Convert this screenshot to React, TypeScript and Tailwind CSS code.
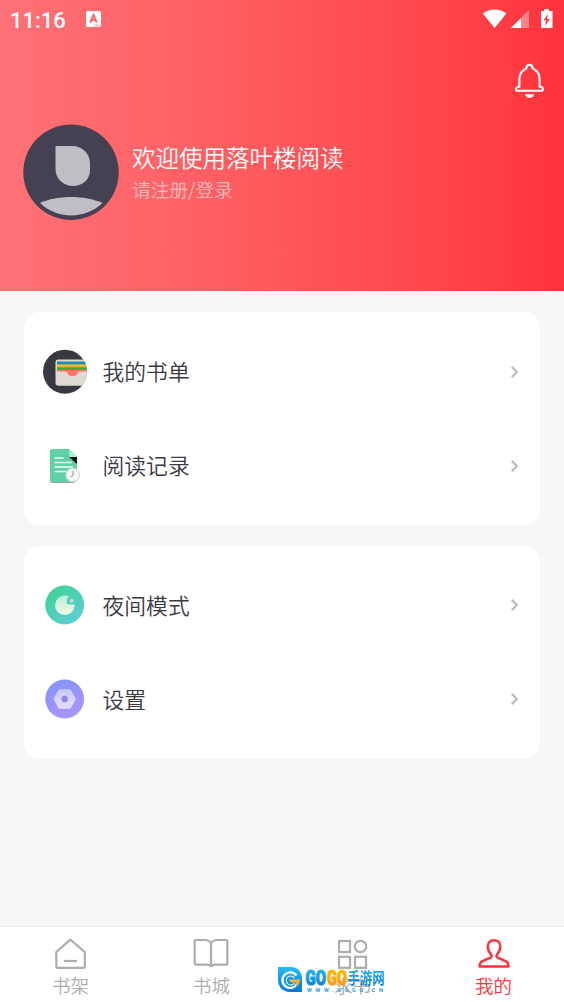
import type { ReactNode } from 'react';

interface MenuItem {
    label: string;
    icon: ReactNode;
}

interface TabItem {
    label: string;
    icon: ReactNode;
    active?: boolean;
}

const primaryMenu: MenuItem[] = [
    { label: '我的书单', icon: <BookListIcon /> },
    { label: '阅读记录', icon: <HistoryIcon /> },
];

const secondaryMenu: MenuItem[] = [
    { label: '夜间模式', icon: <NightIcon /> },
    { label: '设置', icon: <SettingsIcon /> },
];

const tabs: TabItem[] = [
    { label: '书架', icon: <ShelfIcon /> },
    { label: '书城', icon: <StoreIcon /> },
    { label: '求书', icon: <RequestIcon /> },
    { label: '我的', icon: <MineIcon />, active: true },
];

export default function App() {
    return (
        <div className="relative flex h-[1002px] w-[564px] flex-col overflow-hidden bg-[#f7f7f7] font-['Noto_Sans_CJK_SC_DemiLight','Noto_Sans_CJK_SC',sans-serif] font-[350]">
            <header className="h-[291px] shrink-0 bg-linear-to-r from-[#fd7277] to-[#ff323c] text-white">
                <StatusBar />
                <div className="flex h-[86px] items-center justify-end pr-[19px]">
                    <BellIcon />
                </div>
                <div className="flex h-24 items-center gap-[13px] pl-[23px]">
                    <Avatar />
                    <div>
                        <h1 className="text-[23.5px] leading-[34px]">欢迎使用落叶楼阅读</h1>
                        <p className="text-[18.7px] leading-[30px] text-white/55">请注册/登录</p>
                    </div>
                </div>
            </header>

            <main className="flex flex-1 flex-col gap-[20.6px] px-6 pt-[21px]">
                <MenuCard items={primaryMenu} />
                <MenuCard items={secondaryMenu} />
            </main>

            <nav className="grid h-[76px] shrink-0 grid-cols-4 border-t border-[#ececec] bg-white">
                {tabs.map(tab => (
                    <button
                        key={tab.label}
                        className={`flex flex-col items-center pt-2 pr-px text-[18.5px] leading-[26px] ${tab.active ? 'text-[#ff323c]' : 'text-[#adadad]'}`}
                    >
                        {tab.icon}
                        <span className="mt-px pl-px">{tab.label}</span>
                    </button>
                ))}
            </nav>

            <SiteBadge />
        </div>
    );
}

function StatusBar() {
    return (
        <div className="flex h-[38px] items-center justify-between px-[10px]">
            <div className="flex items-center gap-[20px]">
                <span className="w-14 pt-[3px] whitespace-nowrap font-[Roboto,sans-serif] text-[22px] font-medium leading-none">11:16</span>
                <svg width="15" height="16" viewBox="0 0 15 16">
                    <rect width="15" height="16" rx="1.5" fill="#fff" />
                    <path d="M4.2 11.500 7.500 4l3.300 7.500M5.400 9h4.300" fill="none" stroke="#ff686f" strokeWidth="2" />
                    <path d="M8 14.200h6" stroke="#ff686f" strokeWidth="1" strokeDasharray="1.4 .7" />
                </svg>
            </div>
            <svg width="72" height="20" viewBox="0 0 72 20" className="mb-px">
                <path d="M.9 4.400C7.500-.9 18-.9 24.400 4.400L12.600 18.900Z" fill="#fff" />
                <path d="M29 19 47 .8V19Z" fill="#fff" opacity=".38" />
                <path d="M29 19 39 8.900V19Z" fill="#fff" />
                <path d="M62 0h5v2h3.500v17H59V2h3Z" fill="#fff" />
                <path d="m66 5-4.500 6.200h2.600L63 17l5-7h-3Z" fill="#ff3a44" />
            </svg>
        </div>
    );
}

function BellIcon() {
    return (
        <svg width="31" height="36" viewBox="0 0 31 36" fill="none" stroke="currentColor" strokeWidth="2.100" strokeLinejoin="round">
            <path d="M5.400 23.700V16c0-5 3-8.900 7-10.800.4-4.400 5.800-4.400 6.200 0 4 1.900 7 5.800 7 10.800v7.700c4.300.2 4.300 4.100 1.500 4.100H3.900c-2.800 0-2.800-3.900 1.500-4.100Z" />
            <path d="M11 31.200h9c-1 5-8 5-9 0Z" fill="currentColor" stroke="none" />
        </svg>
    );
}

function Avatar() {
    return (
        <svg width="96" height="96" viewBox="0 0 96 96">
            <circle cx="48" cy="48.300" r="47.700" fill="#454153" />
            <path d="M32.500 22H49c10.500 0 18 8 18 17.500v6.500c0 9.500-7.500 16-17 16S32.500 55 32.500 45Z" fill="#c0bec5" />
            <path d="M17 79C34 71 62 71 79.500 79 62 95.500 34 95.500 17 79Z" fill="#c0bec5" />
        </svg>
    );
}

function MenuCard({ items }: { items: MenuItem[] }) {
    return (
        <section className="h-[213px] rounded-2xl bg-white pt-[12.5px]">
            {items.map(item => (
                <button key={item.label} className="flex h-[94px] w-full items-center pl-[18px] pr-5 text-left">
                    {item.icon}
                    <span className="ml-[14.5px] flex-1 text-[21.8px] text-[#3b3944]">{item.label}</span>
                    <svg width="11" height="14" viewBox="0 0 11 14">
                        <path d="m2.800 1.900 5.100 5.100-5.100 5.100" fill="none" stroke="#bdbdbd" strokeWidth="2.200" />
                    </svg>
                </button>
            ))}
        </section>
    );
}

function BookListIcon() {
    return (
        <svg width="46" height="46" viewBox="0 0 46 46">
            <clipPath id="listClip"><circle cx="23" cy="22.700" r="22" /></clipPath>
            <g clipPath="url(#listClip)">
                <rect width="46" height="46" fill="#383840" />
                <rect x="13.500" y="10.500" width="36" height="26" rx="2.500" fill="#dcd8d2" />
                <path d="M15 12.500h31V17H15Z" fill="#168fb7" />
                <path d="M15 15.200h31V20H15Z" fill="#f5b52c" />
                <path d="M15 18.200h31V23H15Z" fill="#3fac3c" />
                <path d="M15 21h31v3H15Z" fill="#fb7767" />
                <path d="M14 22.500h32v14H16.500c-1.500 0-2.500-1-2.500-2.500Z" fill="#dfdad3" />
                <path d="M23.500 22h14c-1.200.5-1.500 1.200-2.200 2.500-1.800 3.600-7.800 3.600-9.600 0-.7-1.300-1-2-2.200-2.500Z" fill="#fb7767" />
            </g>
        </svg>
    );
}

function HistoryIcon() {
    return (
        <svg width="46" height="46" viewBox="0 0 46 46">
            <path d="M8 38.500h24v1H9Z" fill="#244d3d" />
            <path d="M10 6h17l8 8v23c0 1.500-.8 2-2 2H10c-1.200 0-2-.8-2-2V8c0-1.200.8-2 2-2Z" fill="#60d0a5" />
            <path d="M27 14h8v7Z" fill="#111" />
            <path d="M27 6v8h8Z" fill="#a5f0d1" />
            <path d="M12.500 15h9M12.500 19.500H30M12.500 24H31M12.500 28.500H24" stroke="#effff8" strokeWidth="1.600" />
            <circle cx="30.700" cy="32" r="6.800" fill="#f7f7f7" stroke="#d5d5d5" />
            <path d="M31 28v4.500L28.500 34" fill="none" stroke="#aaa" strokeWidth="1.300" />
        </svg>
    );
}

function NightIcon() {
    return (
        <svg width="46" height="46" viewBox="0 0 46 46">
            <defs>
                <linearGradient id="night" x1="0.2" y1="0" x2="0.9" y2="1">
                    <stop stopColor="#3fd193" />
                    <stop offset="1" stopColor="#61cedc" />
                </linearGradient>
                <linearGradient id="moon" x1="0" y1="0" x2="0" y2="1">
                    <stop stopColor="#bcebd8" />
                    <stop offset="1" stopColor="#f2fbe9" />
                </linearGradient>
            </defs>
            <circle cx="22.700" cy="23" r="19.400" fill="url(#night)" />
            <path d="M22.700 13.500c2 0 3.800.3 3.800 1 0 .5-.4.900-.8 1.500-1.800 3.500-1.500 6.500 1.500 6.500h4.200c1 0 1.400.5 1.200 1.500A9.800 9.800 0 1 1 22.700 13.500Z" fill="url(#moon)" />
            <circle cx="29.700" cy="18.700" r="2" fill="#b9dfd6" />
        </svg>
    );
}

function SettingsIcon() {
    return (
        <svg width="46" height="46" viewBox="0 0 46 46">
            <defs>
                <linearGradient id="settings" x1="0.3" y1="0" x2="0.8" y2="1">
                    <stop stopColor="#8594fa" />
                    <stop offset="1" stopColor="#ae94fd" />
                </linearGradient>
                <linearGradient id="nut" x1="0" y1="0" x2="0" y2="1">
                    <stop stopColor="#c9ccfd" />
                    <stop offset="1" stopColor="#e4dcff" />
                </linearGradient>
            </defs>
            <circle cx="22.700" cy="23" r="19.400" fill="url(#settings)" />
            <path d="M17.500 14.500h10.400l4.700 8.500-4.700 8.500H17.500L12.800 23Z" fill="url(#nut)" stroke="url(#nut)" strokeWidth="2.500" strokeLinejoin="round" />
            <circle cx="22.700" cy="23" r="3.200" fill="#8e86dd" />
        </svg>
    );
}

function ShelfIcon() {
    return (
        <svg width="36" height="36" viewBox="0 0 36 36" fill="none" stroke="currentColor" strokeWidth="2.200" strokeLinejoin="round">
            <path d="M18.300 4.700 32.800 17v14.500c0 .8-.5 1.300-1.300 1.300H5.600c-.8 0-1.300-.5-1.300-1.300V17Z" />
            <path d="M12 26h13" />
        </svg>
    );
}

function StoreIcon() {
    return (
        <svg width="36" height="36" viewBox="0 0 36 36" fill="none" stroke="currentColor" strokeWidth="2.200" strokeLinejoin="round">
            <path d="M18 7.500c-2-1.700-3.500-2.500-5.500-2.500H2.700c-.6 0-1 .4-1 1v22.500c0 .8.400 1.200 1 1.200h10.800c2 0 3.500.5 4.500 1.500 1-1 2.500-1.500 4.500-1.500h10.800c.6 0 1-.4 1-1.200V6c0-.6-.4-1-1-1h-9.800c-2 0-3.500.8-5.500 2.500Zm0 0v24" />
        </svg>
    );
}

function RequestIcon() {
    return (
        <svg width="36" height="36" viewBox="0 0 36 36" fill="none" stroke="currentColor" strokeWidth="2.200">
            <rect x="5" y="6" width="11" height="11" />
            <circle cx="26.500" cy="11.500" r="5.700" />
            <rect x="5" y="21.800" width="11" height="11" />
            <rect x="21" y="21.800" width="11" height="11" />
        </svg>
    );
}

function MineIcon() {
    return (
        <svg width="36" height="36" viewBox="-.8 0 36 36" fill="none" stroke="currentColor" strokeWidth="2.500" strokeLinejoin="round">
            <path d="M18.200 5.200c-3.700 0-6.200 2.600-6.200 6.300 0 3.900 1.700 6.300 3.500 8.500.8 1 .4 2-.8 2.600l-8 3.600c-2.200 1-2.900 2.800-2.900 5.400h29c0-2.600-.8-4.400-3-5.400l-8-3.600c-1.200-.6-1.600-1.600-.8-2.600 1.800-2.200 3.500-4.600 3.500-8.500 0-3.700-2.600-6.300-6.300-6.300Z" />
        </svg>
    );
}

// Floating site mark, lies over the tab bar
function SiteBadge() {
    return (
        <div className="pointer-events-none absolute left-[277px] top-[966px]">
            <svg width="112" height="30" viewBox="0 0 112 30" className="overflow-visible">
                <defs>
                    <linearGradient id="siteBlue" x1="0" y1="0" x2="0" y2="1">
                        <stop stopColor="#25bcf6" />
                        <stop offset="1" stopColor="#0778d4" />
                    </linearGradient>
                    <linearGradient id="siteOrange" x1="0" y1="0" x2="0" y2="1">
                        <stop stopColor="#ffc400" />
                        <stop offset="1" stopColor="#ff9100" />
                    </linearGradient>
                </defs>
                <path d="M1 1h13c7 0 11 5 11 12v13H13C6 26 1 21 1 14Z" fill="url(#siteBlue)" />
                <path d="M19.500 9.500A7.800 7.800 0 1 0 20 18" fill="none" stroke="#fff" strokeWidth="2.300" />
                <path d="M17.500 12a4.500 4.500 0 1 0 0 5" fill="none" stroke="#d8f3ff" strokeWidth="1.200" />
                <path d="M12 13.500h11c0 3-1.500 5.500-4 7v-4H14Z" fill="#ffb031" />
                <g fontFamily="Roboto, sans-serif" fontWeight="900" fontSize="21" strokeWidth="1.100">
                    <text x="28.500" y="18.600" textLength="20.500" lengthAdjust="spacingAndGlyphs" fill="url(#siteBlue)" stroke="url(#siteBlue)">GO</text>
                    <text x="50" y="18.600" textLength="20" lengthAdjust="spacingAndGlyphs" fill="url(#siteOrange)" stroke="url(#siteOrange)">GO</text>
                </g>
                <text x="70.500" y="18" textLength="37" lengthAdjust="spacingAndGlyphs" fontFamily="'Noto Sans CJK SC', sans-serif" fontWeight="700" fontSize="16" fill="url(#siteBlue)">手游网</text>
                <text x="30" y="26" textLength="76" fontFamily="Roboto, sans-serif" fontWeight="700" fontSize="5.500" fill="#269bdc">WWW.GOGO.CN</text>
            </svg>
        </div>
    );
}
